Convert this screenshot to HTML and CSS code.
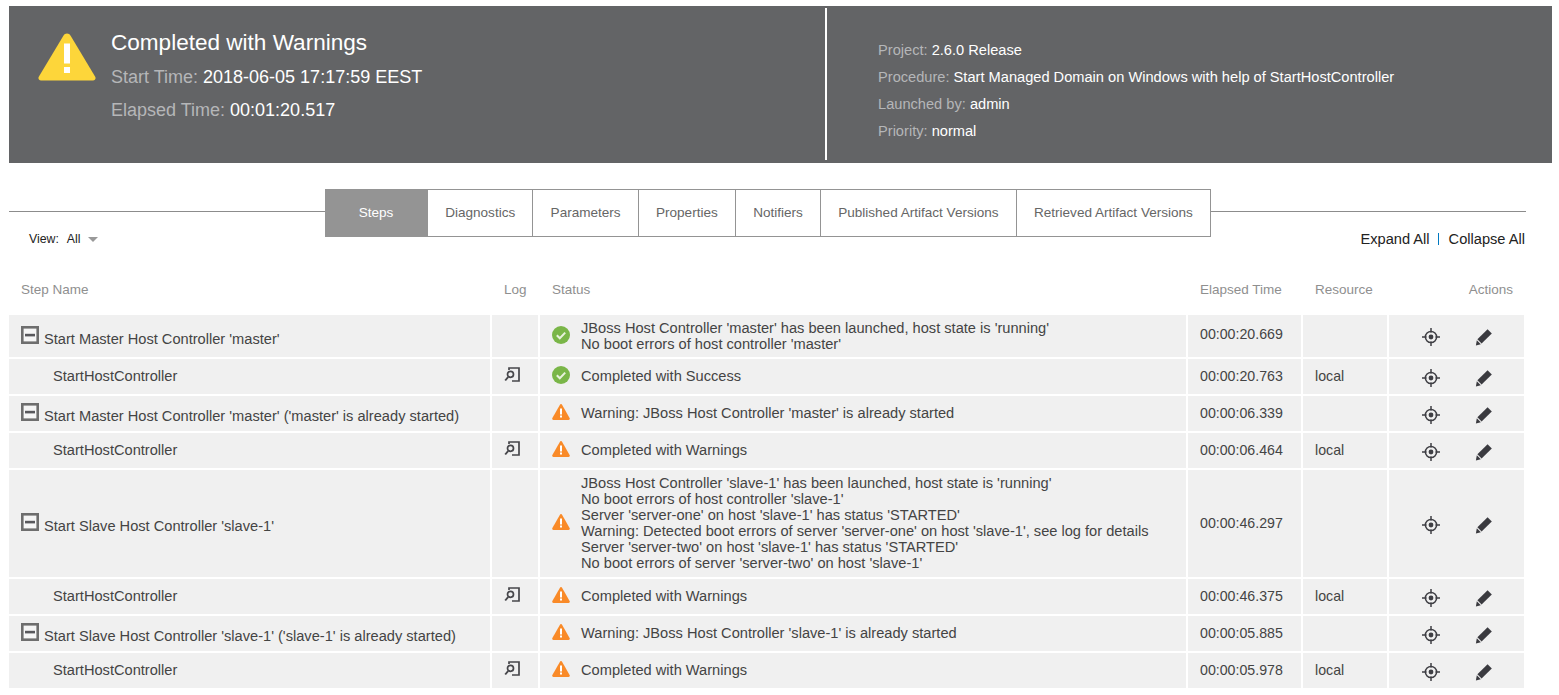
FILE: index.html
```html
<!DOCTYPE html>
<html lang="en">
<head>
<meta charset="utf-8">
<title>Job Details</title>
<link rel="stylesheet" href="styles.css">
</head>
<body>
<svg class="sprites" aria-hidden="true">
  <symbol id="warn" viewBox="0 0 18 17"><path d="M9 .6c.5 0 .9.3 1.2.8l7.4 13.2c.5.9 0 1.9-1 1.9H1.4c-1 0-1.5-1-1-1.9L7.800 1.400C8.100.9 8.500.6 9 .6z" fill="#f98a28"/><rect x="8" y="5" width="2" height="6" fill="#fff"/><rect x="8" y="12" width="2" height="2" fill="#fff"/></symbol>
  <symbol id="ok" viewBox="0 0 18 18"><circle cx="9" cy="9" r="9" fill="#7ab648"/><path d="M4.800 9.200l3 3 5.400-5.600" fill="none" stroke="#e8f2dc" stroke-width="2"/></symbol>
  <symbol id="target" viewBox="0 0 18 18"><circle cx="9" cy="9" r="5.600" fill="none" stroke="#3f3f44" stroke-width="1.500"/><circle cx="9" cy="9" r="2.400" fill="#3f3f44"/><path d="M9 0v4.500M9 13.500V18M0 9h4.500M13.500 9H18" stroke="#3f3f44" stroke-width="1.500"/></symbol>
  <symbol id="pencil" viewBox="0 0 18 18"><path d="M12.600 1.200l4.200 4.200L6.600 15.400l-4.200-4.200z" fill="#3a3a3f"/><path d="M1.800 12.200l4 4-4.900 1.400z" fill="#3a3a3f"/></symbol>
  <symbol id="log" viewBox="0 0 16 16"><path d="M5 3V1h10v13H8" fill="none" stroke="#47474b" stroke-width="1.700"/><circle cx="6.500" cy="7.300" r="3" fill="#f0f0f0" stroke="#47474b" stroke-width="1.700"/><path d="M4.300 9.800L1.200 13.500" stroke="#47474b" stroke-width="1.900"/></symbol>
  <symbol id="minus" viewBox="0 0 18 18"><rect x="1.300" y="1.300" width="15.400" height="15.400" fill="#f6f6f6" stroke="#6e6e6e" stroke-width="2.600"/><rect x="4" y="7.800" width="10" height="2.600" fill="#58585c"/></symbol>
</svg>

<header class="banner">
  <section class="summary">
    <svg class="summary-icon" viewBox="0 0 58 48" aria-hidden="true"><path d="M29 .5c1.500 0 2.800.9 3.600 2.200l24.600 41c1 1.900-.1 3.800-2.200 3.800H3c-2.100 0-3.200-1.900-2.200-3.800l24.600-41C26.200 1.400 27.500.5 29 .5z" fill="#fdd63a"/><rect x="26" y="10.500" width="6" height="20" fill="#fff"/><rect x="26" y="34" width="6" height="6" fill="#fff"/></svg>
    <div class="summary-text">
      <h1 class="summary-title">Completed with Warnings</h1>
      <p class="summary-line"><span class="muted">Start Time:</span> 2018-06-05 17:17:59 EEST</p>
      <p class="summary-line"><span class="muted">Elapsed Time:</span> 00:01:20.517</p>
    </div>
  </section>
  <section class="meta">
    <p class="meta-line"><span class="muted">Project:</span> 2.6.0 Release</p>
    <p class="meta-line"><span class="muted">Procedure:</span> Start Managed Domain on Windows with help of StartHostController</p>
    <p class="meta-line"><span class="muted">Launched by:</span> admin</p>
    <p class="meta-line"><span class="muted">Priority:</span> normal</p>
  </section>
</header>

<nav class="tabs">
  <a class="tab tab-active">Steps</a>
  <a class="tab">Diagnostics</a>
  <a class="tab">Parameters</a>
  <a class="tab">Properties</a>
  <a class="tab">Notifiers</a>
  <a class="tab">Published Artifact Versions</a>
  <a class="tab">Retrieved Artifact Versions</a>
</nav>

<div class="toolbar">
  <div class="view">View:<span class="view-value">All</span><span class="caret"></span></div>
  <div class="expand"><a>Expand All</a><span class="sep"></span><a>Collapse All</a></div>
</div>

<table class="steps">
  <colgroup><col class="c1"><col class="c2"><col class="c3"><col class="c4"><col class="c5"><col class="c6"></colgroup>
  <thead>
    <tr><th>Step Name</th><th>Log</th><th>Status</th><th>Elapsed Time</th><th>Resource</th><th class="th-actions">Actions</th></tr>
  </thead>
  <tbody>
    <tr>
      <td class="name"><svg class="minus"><use href="#minus"/></svg>Start Master Host Controller 'master'</td><td></td>
      <td class="multi"><div class="status"><svg class="sicon"><use href="#ok"/></svg><div>JBoss Host Controller 'master' has been launched, host state is 'running'<br>No boot errors of host controller 'master'</div></div></td>
      <td class="time time-up">00:00:20.669</td><td></td>
      <td><div class="acts"><svg class="aicon"><use href="#target"/></svg><svg class="aicon"><use href="#pencil"/></svg></div></td>
    </tr>
    <tr>
      <td class="sub">StartHostController</td><td><svg class="logicon"><use href="#log"/></svg></td>
      <td><div class="status"><svg class="sicon"><use href="#ok"/></svg><div>Completed with Success</div></div></td>
      <td class="time">00:00:20.763</td><td class="res">local</td>
      <td><div class="acts"><svg class="aicon"><use href="#target"/></svg><svg class="aicon"><use href="#pencil"/></svg></div></td>
    </tr>
    <tr>
      <td class="name"><svg class="minus"><use href="#minus"/></svg>Start Master Host Controller 'master' ('master' is already started)</td><td></td>
      <td><div class="status"><svg class="sicon"><use href="#warn"/></svg><div>Warning: JBoss Host Controller 'master' is already started</div></div></td>
      <td class="time">00:00:06.339</td><td></td>
      <td><div class="acts"><svg class="aicon"><use href="#target"/></svg><svg class="aicon"><use href="#pencil"/></svg></div></td>
    </tr>
    <tr>
      <td class="sub">StartHostController</td><td><svg class="logicon"><use href="#log"/></svg></td>
      <td><div class="status"><svg class="sicon"><use href="#warn"/></svg><div>Completed with Warnings</div></div></td>
      <td class="time">00:00:06.464</td><td class="res">local</td>
      <td><div class="acts"><svg class="aicon"><use href="#target"/></svg><svg class="aicon"><use href="#pencil"/></svg></div></td>
    </tr>
    <tr>
      <td class="name"><svg class="minus"><use href="#minus"/></svg>Start Slave Host Controller 'slave-1'</td><td></td>
      <td class="multi tall"><div class="status"><svg class="sicon"><use href="#warn"/></svg><div>JBoss Host Controller 'slave-1' has been launched, host state is 'running'<br>No boot errors of host controller 'slave-1'<br>Server 'server-one' on host 'slave-1' has status 'STARTED'<br>Warning: Detected boot errors of server 'server-one' on host 'slave-1', see log for details<br>Server 'server-two' on host 'slave-1' has status 'STARTED'<br>No boot errors of server 'server-two' on host 'slave-1'</div></div></td>
      <td class="time">00:00:46.297</td><td></td>
      <td><div class="acts"><svg class="aicon"><use href="#target"/></svg><svg class="aicon"><use href="#pencil"/></svg></div></td>
    </tr>
    <tr>
      <td class="sub">StartHostController</td><td><svg class="logicon"><use href="#log"/></svg></td>
      <td><div class="status"><svg class="sicon"><use href="#warn"/></svg><div>Completed with Warnings</div></div></td>
      <td class="time">00:00:46.375</td><td class="res">local</td>
      <td><div class="acts"><svg class="aicon"><use href="#target"/></svg><svg class="aicon"><use href="#pencil"/></svg></div></td>
    </tr>
    <tr>
      <td class="name"><svg class="minus"><use href="#minus"/></svg>Start Slave Host Controller 'slave-1' ('slave-1' is already started)</td><td></td>
      <td><div class="status"><svg class="sicon"><use href="#warn"/></svg><div>Warning: JBoss Host Controller 'slave-1' is already started</div></div></td>
      <td class="time">00:00:05.885</td><td></td>
      <td><div class="acts"><svg class="aicon"><use href="#target"/></svg><svg class="aicon"><use href="#pencil"/></svg></div></td>
    </tr>
    <tr>
      <td class="sub">StartHostController</td><td><svg class="logicon"><use href="#log"/></svg></td>
      <td><div class="status"><svg class="sicon"><use href="#warn"/></svg><div>Completed with Warnings</div></div></td>
      <td class="time">00:00:05.978</td><td class="res">local</td>
      <td><div class="acts"><svg class="aicon"><use href="#target"/></svg><svg class="aicon"><use href="#pencil"/></svg></div></td>
    </tr>
  </tbody>
</table>
</body>
</html>
```
FILE: styles.css
```css
* { box-sizing: border-box; }
html, body { margin: 0; background: #fff; }
body { font: 14.64px/16px "Liberation Sans", Arial, sans-serif; color: #444; overflow: hidden; height: 695px; }
.sprites { display: none; }

.banner { display: flex; height: 157px; margin: 6px 7px 0 9px; background: #636466; color: #fff; padding: 2px 0 3px; }
.muted { color: #b5b6b8; }
.summary { width: 818px; display: flex; padding: 21px 0 0 29px; border-right: 2px solid #fff; }
.summary-icon { width: 58px; height: 48px; margin: 4px 15px 0 0; flex: none; }
.summary-title { margin: 0; font-size: 22.55px; font-weight: 400; line-height: 28px; }
.summary-line { margin: 7px 0 0; font-size: 18px; line-height: 26px; }
.meta { padding: 32px 0 0 51px; }
.meta-line { margin: 0 0 7px; font-size: 14.64px; line-height: 20px; }

.tabs { display: flex; height: 48px; margin: 26px 33px 0 9px; padding-left: 316px; font-size: 13.55px; background: linear-gradient(#8c8c8c, #8c8c8c) 0 22px / 100% 1px no-repeat; }
.tab { display: flex; align-items: center; padding: 0 17.2px 1px; background: #fff; border: 1px solid #949494; border-left: 0; color: #666; }
.tab-active { width: 103px; justify-content: center; background: #949494; color: #fff; }

.toolbar { display: flex; justify-content: space-between; margin: -8px 34px 0 29px; height: 20px; align-items: center; color: #222; }
.view { font-size: 12.3px; display: flex; align-items: center; }
.view-value { margin-left: 8px; }
.caret { width: 0; height: 0; margin-left: 7px; border: 5px solid transparent; border-top-color: #999; border-bottom: 0; }
.expand { display: flex; align-items: center; }
.sep { width: 1px; height: 12px; margin: 0 10px 0 8px; background: #0079c1; }

.steps { width: 1519px; margin: 18px 0 0 7px; border-collapse: separate; border-spacing: 2px; table-layout: fixed; }
.c1 { width: 481px; } .c2 { width: 46px; } .c3 { width: 646px; } .c4 { width: 113px; } .c5 { width: 84px; } .c6 { width: 135px; }
.steps th { font-weight: 400; font-size: 13.5px; text-align: left; color: #8f8f8f; padding: 0 12px 3px; height: 44px; }
.steps th.th-actions { text-align: right; padding-right: 11px; }
.steps td { background: #f0f0f0; height: 35px; padding: 4px 12px 6px; }
.steps .name { white-space: nowrap; padding: 5px 12px; }
.steps .multi { padding: 5px 12px; }
.steps .tall { padding-bottom: 6px; }
.steps .sub { padding-left: 44px; }
.steps .time { font-size: 14.2px; }
.steps .res { font-size: 14.2px; }
.steps .time-up { padding-bottom: 9px; }
.minus { width: 18px; height: 18px; margin-right: 5px; vertical-align: 0; }
.logicon { display: block; width: 16px; height: 16px; margin: -1px 0 0; }
.status { display: flex; align-items: center; gap: 11px; }
.sicon { width: 18px; height: 18px; flex: none; margin-top: -2px; }
.acts { display: flex; justify-content: flex-end; gap: 35px; padding-top: 4px; margin-right: 19px; }
.aicon { width: 18px; height: 18px; }
```
